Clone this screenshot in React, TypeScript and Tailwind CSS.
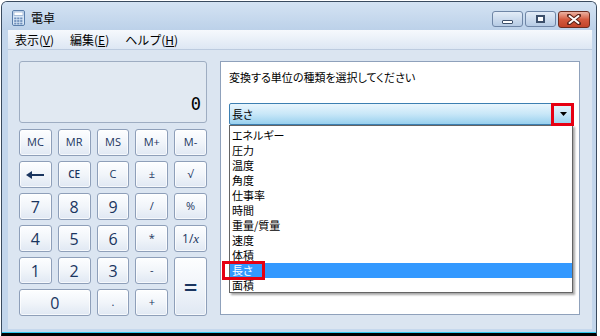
import React from "react";

const jp = "font-['Noto_Sans_CJK_JP',sans-serif]";
const ui = "font-['Open_Sans','Noto_Sans',sans-serif]";

const Key = ({ children, className = "" }: { children: React.ReactNode; className?: string }) => (
  <div
    className={`flex items-center justify-center rounded-[3px] border border-[#8e9fb9] bg-linear-to-b from-[#fdfeff] via-[#f1f5fa] to-[#e0e8f3] text-[#1a355f] shadow-[inset_0_0_0_1px_rgba(255,255,255,0.7)] ${className}`}
  >
    {children}
  </div>
);

const CalcIcon = () => (
  <svg width="13" height="16" viewBox="0 0 13 16">
    <rect x="0.5" y="0.5" width="12" height="15" rx="1.5" fill="#d7e6f6" stroke="#5a7eab" />
    <rect x="2" y="2" width="9" height="3.5" fill="#ffffff" stroke="#7c9cc4" strokeWidth="0.6" />
    {[0, 1, 2].map((r) =>
      [0, 1, 2].map((c) => (
        <rect key={`${r}-${c}`} x={2.2 + c * 3} y={7.5 + r * 2.6} width="2.2" height="1.8" fill="#6f8fbb" />
      ))
    )}
  </svg>
);

const BackArrow = () => (
  <svg width="18" height="8" viewBox="0 0 18 8">
    <line x1="5" y1="4" x2="18" y2="4" stroke="#1a355f" strokeWidth="2" />
    <polygon points="0,4 6,0 6,8" fill="#1a355f" />
  </svg>
);

const listItems = ["エネルギー", "圧力", "温度", "角度", "仕事率", "時間", "重量/質量", "速度", "体積", "長さ", "面積"];

export default function App() {
  return (
    <div className="w-[600px] h-[336px] bg-white overflow-hidden pt-[1px] pl-[1px]">
      <div className="w-[596px] h-[335px] flex flex-col rounded-t-[6px] border-x border-t border-b-[3px] border-[#3a4b5f] border-b-black bg-[#c3d6ec]">
        {/* title bar */}
        <div className="h-[28px] flex items-start pl-[10px] pr-[6px] pt-[8px] bg-linear-to-b from-[#d4e3f3] to-[#bcd1e9] rounded-t-[5px]">
          <CalcIcon />
          <span className={`${jp} ml-[6px] text-[12px] leading-[16px] text-black`}>電卓</span>
          <div className="flex-1" />
          <div className="flex gap-[2px] mt-[1px]">
            <div className="w-[31px] h-[16px] rounded-[3px] border border-[#6f86a6] bg-linear-to-b from-[#e3ecf7] to-[#b6cbe4] flex items-end justify-center pb-[2px]">
              <div className="w-[11px] h-[4px] rounded-[1px] border border-[#3c4f6a] bg-white" />
            </div>
            <div className="w-[31px] h-[16px] rounded-[3px] border border-[#6f86a6] bg-linear-to-b from-[#e3ecf7] to-[#b6cbe4] flex items-center justify-center">
              <div className="w-[9px] h-[8px] border-[2px] border-[#3c4f6a] bg-white" />
            </div>
            <div className="w-[32px] h-[17px] rounded-[3px] border border-[#6b2c20] bg-linear-to-b from-[#eab2a2] via-[#d45a3f] to-[#c2442a] flex items-center justify-center">
              <svg width="14" height="11" viewBox="0 0 14 11">
                <path d="M2 1.5 L12 9.5 M12 1.5 L2 9.5" stroke="#5a2218" strokeWidth="4" strokeLinecap="round" />
                <path d="M2.5 2 L11.5 9 M11.5 2 L2.5 9" stroke="#ffffff" strokeWidth="2" strokeLinecap="round" />
              </svg>
            </div>
          </div>
        </div>

        <div className="pl-[6px] pr-[4px] flex flex-col">
          {/* menu bar */}
          <div className={`${jp} h-[20px] flex items-center pl-[7px] gap-[16px] text-[12px] text-black bg-linear-to-b from-[#f6f9fd] to-[#dde7f3] border-b border-[#bccbdf]`}>
            <span>
              表示(<span className="underline">V</span>)
            </span>
            <span>
              編集(<span className="underline">E</span>)
            </span>
            <span>
              ヘルプ(<span className="underline">H</span>)
            </span>
          </div>

          {/* client area */}
          <div className="h-[279px] bg-[#dbe5f1] flex pl-[11px] pt-[11px] gap-[13px]">
            {/* calculator */}
            <div className="w-[188px] flex flex-col">
              <div className="h-[62px] rounded-[3px] border border-[#9eadc2] bg-[#e1e9f2] text-right pr-[5px] pt-[32px] font-['DejaVu_Sans_Mono',monospace] text-[17px] leading-[20px] text-black">
                0
              </div>
              <div className={`${ui} mt-[6px] grid grid-cols-5 gap-x-[6px] gap-y-[5px] auto-rows-[27px]`}>
                <Key className="text-[11px]">MC</Key>
                <Key className="text-[11px]">MR</Key>
                <Key className="text-[11px]">MS</Key>
                <Key className="text-[11px]">M+</Key>
                <Key className="text-[11px]">M-</Key>

                <Key>
                  <BackArrow />
                </Key>
                <Key className="text-[10px] font-semibold">CE</Key>
                <Key className="text-[11px]">C</Key>
                <Key className="text-[11px]">±</Key>
                <Key className="text-[11px]">√</Key>

                <Key className="text-[16px]">7</Key>
                <Key className="text-[16px]">8</Key>
                <Key className="text-[16px]">9</Key>
                <Key className="text-[11px]">/</Key>
                <Key className="text-[11px]">%</Key>

                <Key className="text-[16px]">4</Key>
                <Key className="text-[16px]">5</Key>
                <Key className="text-[16px]">6</Key>
                <Key className="text-[11px]">*</Key>
                <Key className="text-[12px]">
                  1/<span className="font-['Liberation_Serif',serif] italic text-[13px]">x</span>
                </Key>

                <Key className="text-[16px]">1</Key>
                <Key className="text-[16px]">2</Key>
                <Key className="text-[16px]">3</Key>
                <Key className="text-[11px]">-</Key>
                <Key className="row-span-2 text-[24px] font-semibold">=</Key>

                <Key className="col-span-2 text-[16px]">0</Key>
                <Key className="text-[11px]">.</Key>
                <Key className="text-[11px]">+</Key>
              </div>
            </div>

            {/* converter panel */}
            <div className={`${jp} [font-feature-settings:'palt'] relative w-[360px] h-[254px] border border-[#8fa1bb] bg-white pl-[8px] pt-[8px]`}>
              <div className="text-[11px] leading-[15px] text-black">変換する単位の種類を選択してください</div>
              <div className="mt-[18px] w-[344px] h-[22px] flex items-center rounded-[2px] border border-[#3c7fb1] bg-linear-to-b from-[#e8f5fd] via-[#c8e7f8] to-[#98d0ee] pl-[2px] text-[11px] text-black">
                <span className="flex-1">長さ</span>
                <div className="w-[17px] flex justify-center">
                  <svg width="7" height="4" viewBox="0 0 7 4">
                    <polygon points="0,0 7,0 3.5,4" fill="#000" />
                  </svg>
                </div>
              </div>

              {/* dropdown list */}
              <div className="absolute left-[8px] top-[63px] w-[344px] h-[168px] border border-[#646464] bg-white pt-[2px] shadow-[2px_2px_2px_rgba(0,0,0,0.35)]">
                {listItems.map((item) => (
                  <div
                    key={item}
                    className={`h-[15px] leading-[15px] pl-[2px] text-[11px] ${
                      item === "長さ" ? "bg-[#3399ff] text-white" : "text-black"
                    }`}
                  >
                    {item}
                  </div>
                ))}
              </div>

              {/* red highlight boxes */}
              <div className="absolute left-[330px] top-[41px] w-[23px] h-[23px] border-[3px] border-[#e60012]" />
              <div className="absolute left-[1px] top-[199px] w-[43px] h-[19px] border-[3px] border-[#e60012]" />
            </div>
          </div>

          <div className="h-[3px] bg-[#c6d8ed]" />
        </div>
        <div className="h-[1px] bg-[#2fc7ee]" />
      </div>
    </div>
  );
}
